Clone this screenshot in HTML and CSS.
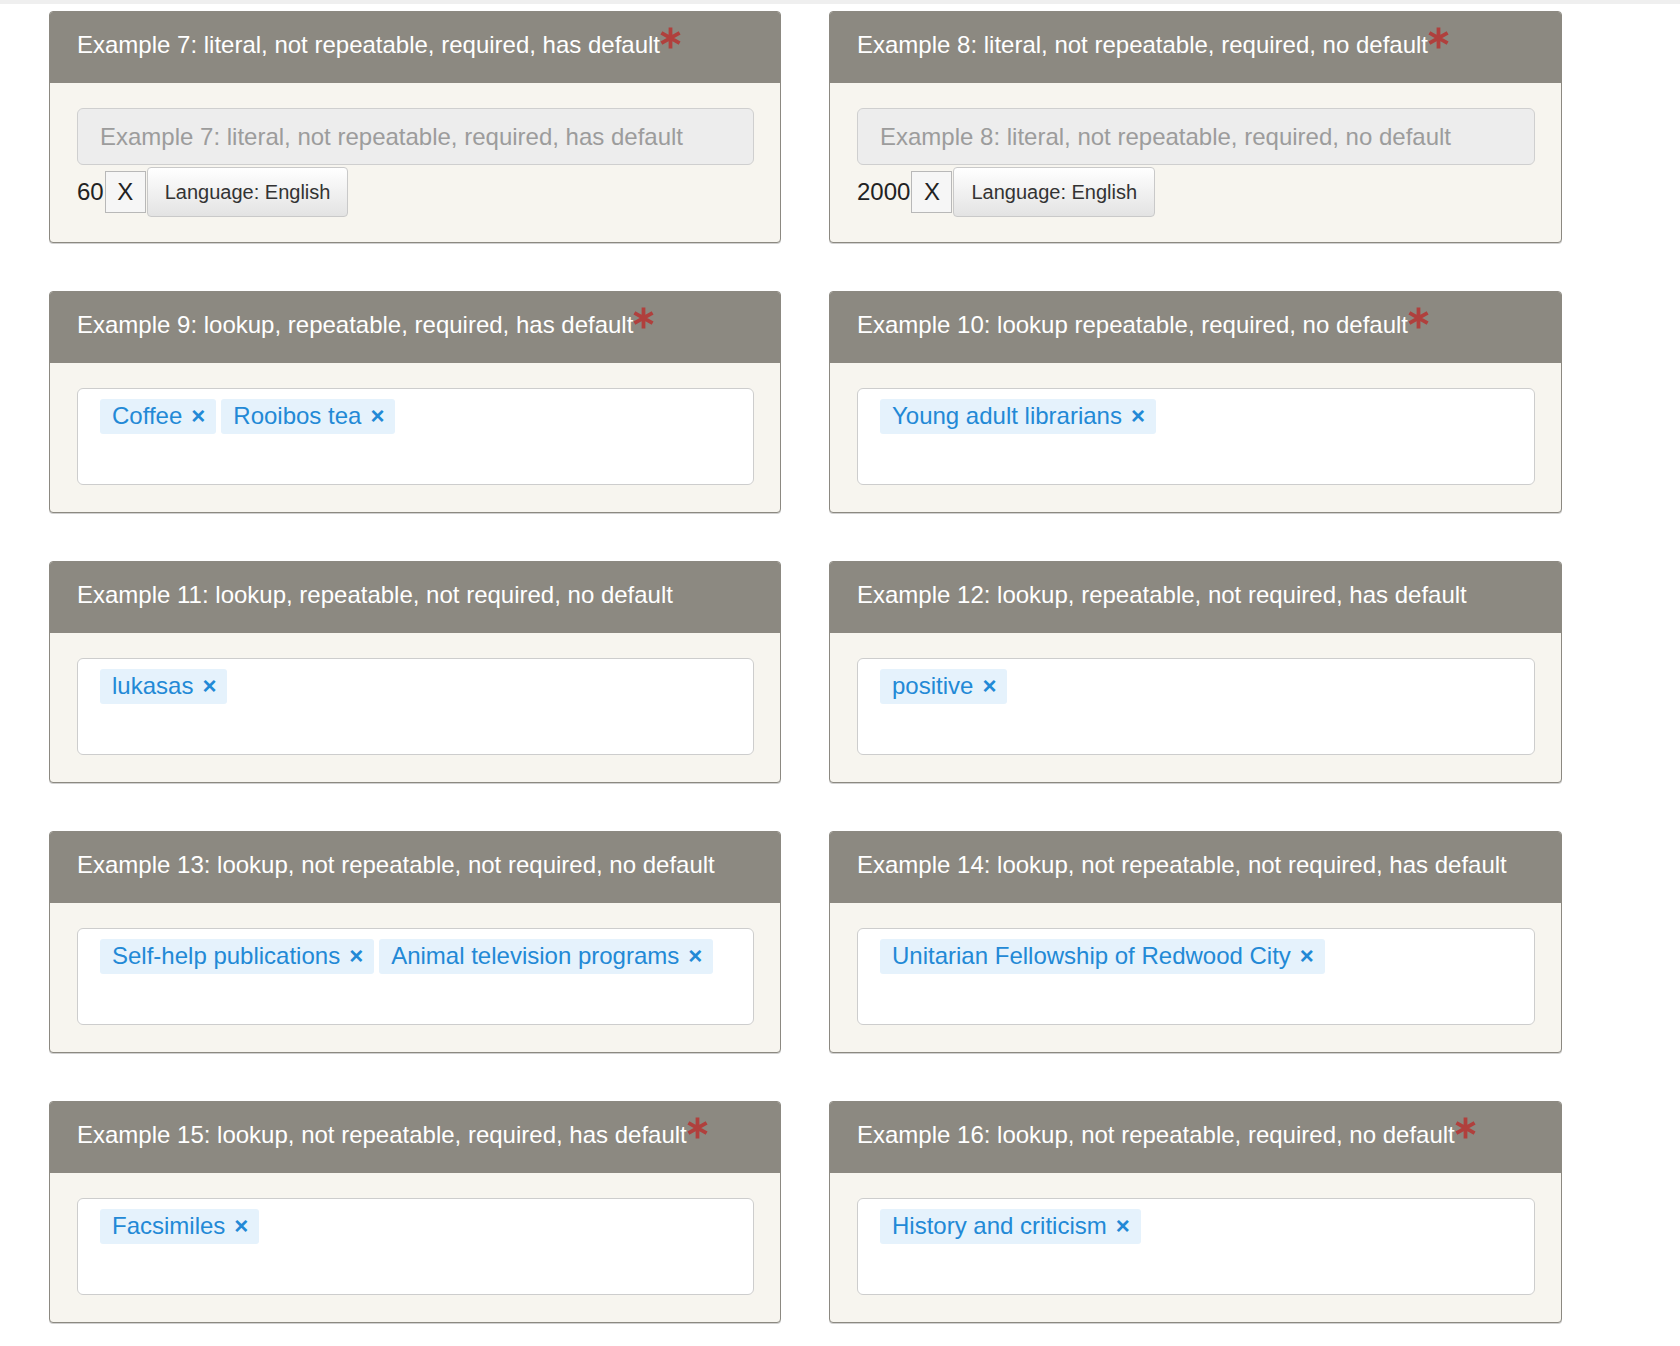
FILE: index.html
```html
<!DOCTYPE html>
<html lang="en">
<head>
<meta charset="utf-8">
<title>Examples</title>
<link rel="stylesheet" href="styles.css">
</head>
<body>
<div class="topbar"></div>
<main class="grid">
  <section class="panel">
    <header class="panel-heading">Example 7: literal, not repeatable, required, has default<svg class="req" viewBox="0 0 20 21" width="21" height="22"><path d="M10 0.5V20.5M1.3 5.5L18.7 15.5M1.3 15.5L18.7 5.5"/></svg></header>
    <div class="panel-body literal-body">
      <input class="literal-input" type="text" placeholder="Example 7: literal, not repeatable, required, has default">
      <div class="literal-row"><span class="lit-value">60</span><button class="remove">X</button><button class="lang">Language: English</button></div>
    </div>
  </section>
  <section class="panel">
    <header class="panel-heading">Example 8: literal, not repeatable, required, no default<svg class="req" viewBox="0 0 20 21" width="21" height="22"><path d="M10 0.5V20.5M1.3 5.5L18.7 15.5M1.3 15.5L18.7 5.5"/></svg></header>
    <div class="panel-body literal-body">
      <input class="literal-input" type="text" placeholder="Example 8: literal, not repeatable, required, no default">
      <div class="literal-row"><span class="lit-value">2000</span><button class="remove">X</button><button class="lang">Language: English</button></div>
    </div>
  </section>

  <section class="panel">
    <header class="panel-heading">Example 9: lookup, repeatable, required, has default<svg class="req" viewBox="0 0 20 21" width="21" height="22"><path d="M10 0.5V20.5M1.3 5.5L18.7 15.5M1.3 15.5L18.7 5.5"/></svg></header>
    <div class="panel-body lookup-body">
      <div class="token-box"><span class="token">Coffee<span class="token-x">×</span></span><span class="token">Rooibos tea<span class="token-x">×</span></span></div>
    </div>
  </section>
  <section class="panel">
    <header class="panel-heading">Example 10: lookup repeatable, required, no default<svg class="req" viewBox="0 0 20 21" width="21" height="22"><path d="M10 0.5V20.5M1.3 5.5L18.7 15.5M1.3 15.5L18.7 5.5"/></svg></header>
    <div class="panel-body lookup-body">
      <div class="token-box"><span class="token">Young adult librarians<span class="token-x">×</span></span></div>
    </div>
  </section>

  <section class="panel">
    <header class="panel-heading">Example 11: lookup, repeatable, not required, no default</header>
    <div class="panel-body lookup-body">
      <div class="token-box"><span class="token">lukasas<span class="token-x">×</span></span></div>
    </div>
  </section>
  <section class="panel">
    <header class="panel-heading">Example 12: lookup, repeatable, not required, has default</header>
    <div class="panel-body lookup-body">
      <div class="token-box"><span class="token">positive<span class="token-x">×</span></span></div>
    </div>
  </section>

  <section class="panel">
    <header class="panel-heading">Example 13: lookup, not repeatable, not required, no default</header>
    <div class="panel-body lookup-body">
      <div class="token-box"><span class="token">Self-help publications<span class="token-x">×</span></span><span class="token">Animal television programs<span class="token-x">×</span></span></div>
    </div>
  </section>
  <section class="panel">
    <header class="panel-heading">Example 14: lookup, not repeatable, not required, has default</header>
    <div class="panel-body lookup-body">
      <div class="token-box"><span class="token">Unitarian Fellowship of Redwood City<span class="token-x">×</span></span></div>
    </div>
  </section>

  <section class="panel">
    <header class="panel-heading">Example 15: lookup, not repeatable, required, has default<svg class="req" viewBox="0 0 20 21" width="21" height="22"><path d="M10 0.5V20.5M1.3 5.5L18.7 15.5M1.3 15.5L18.7 5.5"/></svg></header>
    <div class="panel-body lookup-body">
      <div class="token-box"><span class="token">Facsimiles<span class="token-x">×</span></span></div>
    </div>
  </section>
  <section class="panel">
    <header class="panel-heading">Example 16: lookup, not repeatable, required, no default<svg class="req" viewBox="0 0 20 21" width="21" height="22"><path d="M10 0.5V20.5M1.3 5.5L18.7 15.5M1.3 15.5L18.7 5.5"/></svg></header>
    <div class="panel-body lookup-body">
      <div class="token-box"><span class="token">History and criticism<span class="token-x">×</span></span></div>
    </div>
  </section>
</main>
</body>
</html>
```

FILE: styles.css
```css
* {
  box-sizing: border-box;
}

html, body {
  margin: 0;
  padding: 0;
  background: #ffffff;
  font-family: "Liberation Sans", Arial, sans-serif;
  color: #333333;
}

.topbar {
  height: 4px;
  background: #efefef;
}

.grid {
  display: grid;
  grid-template-columns: 732px 733px;
  column-gap: 48px;
  row-gap: 48px;
  align-items: start;
  margin: 7px 0 0 49px;
  padding-bottom: 23px;
}

.panel {
  background: #f7f5ef;
  border: 1px solid #8c8981;
  border-radius: 4px;
  overflow: hidden;
  box-shadow: 0 1px 0 rgba(0, 0, 0, 0.18);
}

.panel-heading {
  height: 71px;
  padding: 18px 27px 0 27px;
  background: #8c8981;
  color: #ffffff;
  font-size: 24px;
  line-height: 29px;
  white-space: nowrap;
}

.req {
  vertical-align: 4px;
  margin-top: -10px;
  margin-left: 0;
  fill: none;
  stroke: #b0403d;
  stroke-width: 3.6;
}

.panel-body {
  padding: 25px 26px 25px 27px;
}

.lookup-body {
  padding-bottom: 27px;
}

.literal-input {
  display: block;
  width: 100%;
  height: 57px;
  margin: 0;
  padding: 0 22px;
  background: #ededed;
  border: 1px solid #cfcfcf;
  border-radius: 6px;
  font-family: "Liberation Sans", Arial, sans-serif;
  font-size: 24px;
  color: #333333;
  outline: none;
}

.literal-input::placeholder {
  color: #9c9c9c;
  opacity: 1;
}

.literal-row {
  display: flex;
  align-items: center;
  margin-top: 2px;
  height: 50px;
}

.lit-value {
  font-size: 24px;
  line-height: 28px;
  color: #222222;
  margin-right: 1px;
}

.remove {
  width: 41px;
  height: 42px;
  margin: 0 1px 0 0;
  padding: 0;
  background: #f6f6f6;
  border: 1px solid #b8b8b8;
  border-radius: 0;
  font-family: "Liberation Sans", Arial, sans-serif;
  font-size: 24px;
  color: #222222;
}

.lang {
  height: 50px;
  margin: 0;
  padding: 0 17px;
  background: linear-gradient(#ffffff, #e3e3e3);
  border: 1px solid #c9c9c9;
  border-radius: 4px;
  font-family: "Liberation Sans", Arial, sans-serif;
  font-size: 20px;
  color: #333333;
}

.token-box {
  height: 97px;
  padding: 10px 22px;
  background: #ffffff;
  border: 1px solid #cdcdcd;
  border-radius: 6px;
  display: flex;
  align-items: flex-start;
  gap: 5px;
}

.token {
  display: inline-flex;
  align-items: center;
  height: 35px;
  padding: 0 11px 2px 12px;
  background: #e5f2fc;
  border-radius: 3px;
  color: #2289d6;
  font-size: 24px;
  line-height: 33px;
  white-space: nowrap;
}

.token-x {
  margin-left: 9px;
  font-size: 24px;
  font-weight: bold;
}
```
